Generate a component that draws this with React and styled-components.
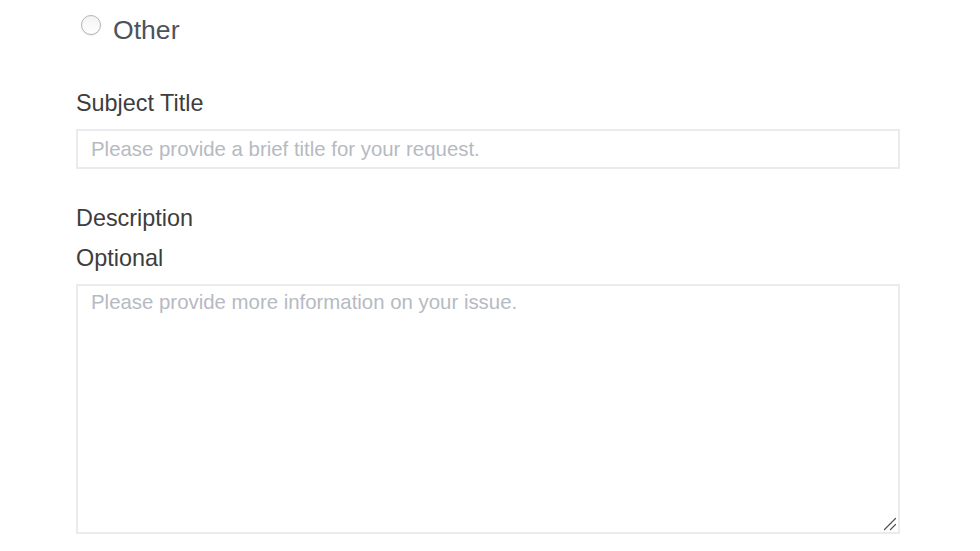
import React from "react";
import styled, { createGlobalStyle } from "styled-components";

const GlobalStyle = createGlobalStyle`
  html, body {
    margin: 0;
    padding: 0;
    background: #ffffff;
  }
  body {
    font-family: "Liberation Sans", Arial, Helvetica, sans-serif;
  }
`;

const Form = styled.form`
  width: 824px;
  padding: 15px 0 0 76px;
  display: flex;
  flex-direction: column;
`;

const RadioRow = styled.label`
  display: flex;
  align-items: flex-start;
  gap: 12px;
  height: 30px;
  padding-left: 5px;
  cursor: pointer;
`;

const RadioInput = styled.input.attrs({ type: "radio" })`
  appearance: none;
  -webkit-appearance: none;
  margin: 0;
  width: 20px;
  height: 20px;
  border-radius: 50%;
  border: 1px solid #b3b3b3;
  background: linear-gradient(#f3f3f3, #ffffff);
  box-shadow: 0 1px 1px rgba(0, 0, 0, 0.08);
  box-sizing: border-box;
  flex: none;
`;

const RadioText = styled.span`
  font-size: 26.6px;
  line-height: 30px;
  color: #4c535d;
`;

const FieldLabel = styled.label`
  display: block;
  font-size: 23.4px;
  line-height: 27px;
  color: #3d3d3d;
  margin-top: ${({ $top }) => $top}px;
  margin-bottom: ${({ $bottom }) => $bottom}px;
`;

const TextInput = styled.input`
  display: block;
  width: 100%;
  height: 40px;
  box-sizing: border-box;
  border: 2px solid #e9ebee;
  border-radius: 0;
  padding: 0 13px;
  margin: 0;
  font-family: inherit;
  font-size: 20.4px;
  color: #333;
  outline: none;

  &::placeholder {
    color: #b6bac1;
  }
`;

const AreaWrap = styled.div`
  position: relative;
  width: 100%;
`;

const TextArea = styled.textarea`
  display: block;
  width: 100%;
  height: 250px;
  box-sizing: border-box;
  border: 2px solid #e9ebee;
  border-radius: 0;
  padding: 5px 13px;
  margin: 0;
  font-family: inherit;
  font-size: 20.4px;
  color: #333;
  outline: none;
  resize: none;

  &::placeholder {
    color: #b6bac1;
  }
`;

const Grip = styled.svg`
  position: absolute;
  right: 3px;
  bottom: 3px;
  width: 14px;
  height: 14px;
  pointer-events: none;
`;

export default function App() {
  return (
    <>
      <GlobalStyle />
      <Form onSubmit={(e) => e.preventDefault()}>
        <RadioRow>
          <RadioInput name="category" value="other" />
          <RadioText>Other</RadioText>
        </RadioRow>

        <FieldLabel htmlFor="subject" $top={45} $bottom={12}>
          Subject Title
        </FieldLabel>
        <TextInput
          id="subject"
          placeholder="Please provide a brief title for your request."
        />

        <FieldLabel htmlFor="description" $top={36} $bottom={13}>
          Description
        </FieldLabel>
        <FieldLabel htmlFor="description" $top={0} $bottom={12}>
          Optional
        </FieldLabel>
        <AreaWrap>
          <TextArea
            id="description"
            placeholder="Please provide more information on your issue."
          />
          <Grip viewBox="0 0 14 14">
            <path
              d="M1.5 12.5 L12.5 1.5 M7.5 12.5 L12.5 7.5"
              stroke="#555"
              strokeWidth="1.3"
              strokeLinecap="round"
            />
          </Grip>
        </AreaWrap>
      </Form>
    </>
  );
}
